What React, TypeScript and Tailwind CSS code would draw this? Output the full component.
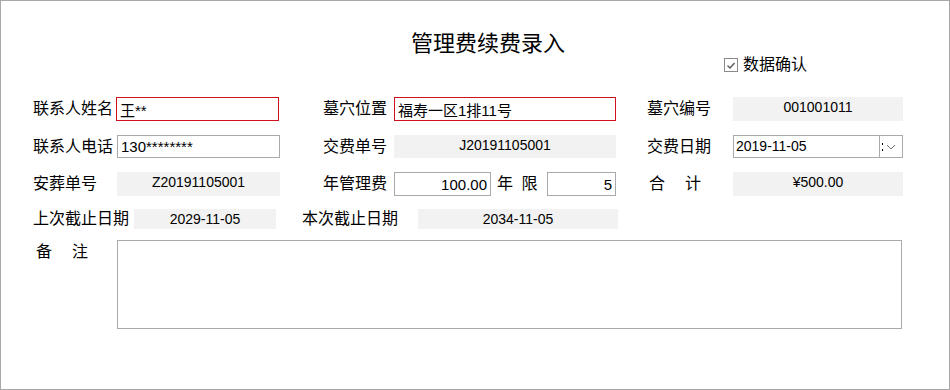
import React from "react";

const font = "[font-family:'Liberation_Sans','Noto_Sans_CJK_SC',sans-serif]";

const Label = ({ text, className = "" }: { text: string; className?: string }) => (
  <div className={`flex items-center h-full text-[16px] text-black whitespace-nowrap ${className}`}>{text}</div>
);

const ReadBox = ({ value, className = "" }: { value: string; className?: string }) => (
  <div className={`h-full bg-[#f2f2f2] flex justify-center pt-[2px] text-[14px] leading-[16px] text-black ${className}`}>
    {value}
  </div>
);

const TextBox = ({
  value,
  red = false,
  right = false,
  className = "",
}: {
  value: string;
  red?: boolean;
  right?: boolean;
  className?: string;
}) => (
  <input
    readOnly
    defaultValue={value}
    className={`h-full border ${red ? "border-[#d0101c]" : "border-[#a9a9a9]"} bg-white px-[3px] text-[15px] text-black outline-none ${
      right ? "text-right" : "text-left"
    } ${font} ${className}`}
  />
);

export default function App() {
  return (
    <div className={`w-[950px] h-[390px] border border-[#a8a8a8] bg-white flex flex-col ${font}`}>
      {/* header */}
      <div className="h-[96px] flex flex-col">
        <div className="pt-[31px] pl-[410px] text-[22px] leading-[24px] text-black">管理费续费录入</div>
        <div className="ml-[723px] flex items-center gap-[5px] h-[18px]">
          <div className="w-[14px] h-[14px] border border-[#8a8a8a] flex items-center justify-center">
            <svg width="10" height="9" viewBox="0 0 10 9">
              <path d="M1.5 4.5 L4 7 L8.5 2" fill="none" stroke="#555" strokeWidth="1.3" />
            </svg>
          </div>
          <span className="text-[16px] leading-[18px] text-black">数据确认</span>
        </div>
      </div>

      {/* row 1 */}
      <div className="h-[24px] flex pl-[32px]">
        <Label text="联系人姓名" className="w-[83px]" />
        <TextBox value="王**" red className="w-[163px]" />
        <Label text="墓穴位置" className="w-[115px] justify-end pr-[7px]" />
        <TextBox value="福寿一区1排11号" red className="w-[222px]" />
        <Label text="墓穴编号" className="w-[117px] pl-[31px]" />
        <ReadBox value="001001011" className="w-[170px]" />
      </div>

      {/* row 2 */}
      <div className="mt-[14px] h-[23px] flex pl-[32px]">
        <Label text="联系人电话" className="w-[84px]" />
        <TextBox value="130********" className="w-[163px]" />
        <Label text="交费单号" className="w-[114px] justify-end pr-[7px]" />
        <ReadBox value="J20191105001" className="w-[222px]" />
        <Label text="交费日期" className="w-[117px] pl-[31px]" />
        <div className="w-[170px] h-full border border-[#a9a9a9] flex">
          <div className="flex-1 flex items-center pl-[2px] text-[14px] text-black">2019-11-05</div>
          <div className="w-[23px] h-full border-l border-[#a9a9a9] flex items-center pl-[2px] gap-[3px]">
            <div className="flex flex-col gap-[4px]">
              <div className="w-[1px] h-[2px] bg-black" />
              <div className="w-[1px] h-[2px] bg-black" />
            </div>
            <svg width="10" height="6" viewBox="0 0 10 6">
              <path d="M1 1 L5 5 L9 1" fill="none" stroke="#707070" strokeWidth="1" />
            </svg>
          </div>
        </div>
      </div>

      {/* row 3 */}
      <div className="mt-[14px] h-[24px] flex pl-[32px]">
        <Label text="安葬单号" className="w-[84px]" />
        <ReadBox value="Z20191105001" className="w-[163px]" />
        <Label text="年管理费" className="w-[114px] justify-end pr-[7px]" />
        <TextBox value="100.00" right className="w-[97px]" />
        <Label text="年 限" className="w-[56px] pl-[6px] tracking-[2px]" />
        <TextBox value="5" right className="w-[69px]" />
        <Label text="合　　计" className="w-[117px] pl-[33px] tracking-[-4px]" />
        <ReadBox value="¥500.00" className="w-[170px]" />
      </div>

      {/* row 4 */}
      <div className="mt-[13px] h-[20px] flex pl-[32px]">
        <Label text="上次截止日期" className="w-[101px]" />
        <ReadBox value="2029-11-05" className="w-[142px] pt-[1px]" />
        <Label text="本次截止日期" className="w-[142px] pl-[26px]" />
        <ReadBox value="2034-11-05" className="w-[200px] pt-[1px]" />
      </div>

      {/* row 5 */}
      <div className="mt-[11px] flex pl-[32px]">
        <div className="w-[84px] pl-[3px] pt-[2px] text-[16px] leading-[20px] text-black tracking-[-4px]">备　　注</div>
        <textarea readOnly className="w-[785px] h-[89px] border border-[#a9a9a9] resize-none outline-none bg-white" />
      </div>
    </div>
  );
}
